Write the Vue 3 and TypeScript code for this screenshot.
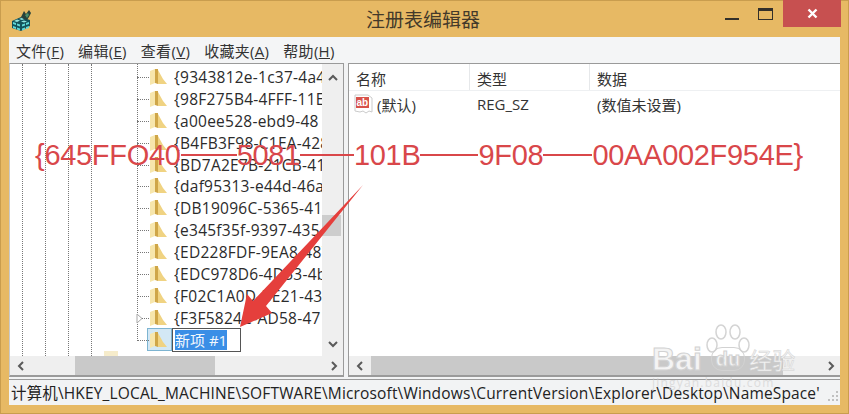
<script setup lang="ts">
const keys = [
  '{9343812e-1c37-4a4',
  '{98F275B4-4FFF-11E',
  '{a00ee528-ebd9-48',
  '{B4FB3F98-C1EA-428',
  '{BD7A2E7B-21CB-41',
  '{daf95313-e44d-46a',
  '{DB19096C-5365-41',
  '{e345f35f-9397-435',
  '{ED228FDF-9EA8-487',
  '{EDC978D6-4D53-4b',
  '{F02C1A0D-BE21-43',
  '{F3F5824C-AD58-47',
]
const guides = [12, 35, 58, 81]
const menus = [
  { label: '文件', key: 'F' },
  { label: '编辑', key: 'E' },
  { label: '查看', key: 'V' },
  { label: '收藏夹', key: 'A' },
  { label: '帮助', key: 'H' },
]
const parts = [
  { text: '{645FFO40', line: 56 },
  { text: '5081', line: 54 },
  { text: '101B', line: 58 },
  { text: '9F08', line: 49 },
  { text: '00AA002F954E}', line: 0 },
]
</script>

<template>
  <div class="window">
    <header class="titlebar">
      <svg class="app-icon" width="22" height="22" viewBox="0 0 22 22">
        <path d="M1 12l9-4 9 3v6l-9 5-9-3z" fill="#12525c" />
        <path d="M2 13l3 1v2l-3-1zM6 14.500l3 1v2l-3-1zM2 17l3 1v2l-3-1zM6 18.500l3 1v2l-3-1zM11 15.500l3-1v2l-3 1zM15 14l3-1v2l-3 1zM11 19.500l3-1v2l-3 1zM15 18l3-1v2l-3 1z" fill="#5fd8d8" />
        <path d="M3 12l3-1.500 3 1-3 1.500zM8 10l2.500-1 3 1-2.500 1zM10 12.500l3-1 3 1-3 1z" fill="#8fe6e0" />
        <path d="M10 8l3-6 2 3 3-4 2 3-2 4-2 3-3-1z" fill="#27423a" />
        <path d="M14 6l3-2 1 2-2 3z" fill="#4b8f6a" />
      </svg>
      <h1 class="title">注册表编辑器</h1>
      <div class="controls">
        <span class="min"></span>
        <span class="max"></span>
        <span class="close">
          <svg width="11" height="11" viewBox="0 0 11 11"><path d="M1.500 1.500l8 8M9.500 1.500l-8 8" stroke="#fff" stroke-width="2.400" /></svg>
        </span>
      </div>
    </header>

    <nav class="menubar">
      <span v-for="m in menus" :key="m.key" class="menu">{{ m.label }}(<u>{{ m.key }}</u>)</span>
    </nav>

    <main class="panes">
      <section class="pane tree">
        <div class="tree-body">
          <i v-for="x in guides" :key="x" class="guide" :style="{ left: x + 'px' }"></i>
          <i class="guide trunk"></i>
          <i class="peek"></i>
          <div class="rows">
            <div v-for="(k, i) in keys" :key="k" class="row">
              <svg v-if="i === 11" class="twisty" width="7" height="11" viewBox="0 0 7 11"><path d="M1 1l5 4.500-5 4.500z" fill="#fff" stroke="#a6a6a6" /></svg>
              <i class="stub"></i>
              <svg class="folder" width="18" height="18" viewBox="0 0 18 18">
                <path d="M5 1h3v15l-3-1z" fill="#cfa648" />
                <path d="M8 2l5 9 4 5H8z" fill="#f0d382" />
                <path d="M0 3l5-2v14l-5 2z" fill="#f7e6ac" />
              </svg>
              <span class="key">{{ k }}</span>
            </div>
            <div class="row">
              <i class="stub"></i>
              <span class="folder-sel">
                <svg width="18" height="18" viewBox="0 0 18 18">
                  <path d="M5 1h3v15l-3-1z" fill="#cfa648" />
                  <path d="M8 2l5 9 4 5H8z" fill="#f0d382" />
                  <path d="M0 3l5-2v14l-5 2z" fill="#f7e6ac" />
                </svg>
              </span>
              <span class="edit"><span class="edit-text">新项 #1</span></span>
            </div>
          </div>
          <div class="vbar">
            <svg width="12" height="8" viewBox="0 0 12 8"><path d="M2 6l4-4 4 4" fill="none" stroke="#5a5a5a" stroke-width="2" /></svg>
            <span class="vthumb"></span>
            <svg width="12" height="8" viewBox="0 0 12 8"><path d="M2 2l4 4 4-4" fill="none" stroke="#5a5a5a" stroke-width="2" /></svg>
          </div>
        </div>
        <div class="hbar">
          <svg width="8" height="12" viewBox="0 0 8 12"><path d="M6 2L2 6l4 4" fill="none" stroke="#5a5a5a" stroke-width="2" /></svg>
          <span class="hthumb left-thumb"></span>
          <svg width="8" height="12" viewBox="0 0 8 12"><path d="M2 2l4 4-4 4" fill="none" stroke="#5a5a5a" stroke-width="2" /></svg>
        </div>
      </section>

      <section class="pane list">
        <div class="list-head">
          <span class="col c-name">名称</span>
          <span class="col c-type">类型</span>
          <span class="col c-data">数据</span>
        </div>
        <div class="list-row">
          <span class="c-name value-name">
            <svg width="19" height="20" viewBox="0 0 19 20">
              <path d="M1 1h13l4 3v14l-3-1-3 2-3-2-3 1-5-1z" fill="#fff" stroke="#cbcbcb" />
              <rect x="2" y="3" width="13" height="11" fill="#d8524a" />
              <text x="2.500" y="12" font-size="10" font-weight="700" fill="#fff" font-family="Liberation Sans, sans-serif">ab</text>
            </svg>
            (默认)
          </span>
          <span class="c-type value-cell">REG_SZ</span>
          <span class="c-data value-cell">(数值未设置)</span>
        </div>
        <div class="list-fill"></div>
        <div class="hbar">
          <svg width="8" height="12" viewBox="0 0 8 12"><path d="M6 2L2 6l4 4" fill="none" stroke="#5a5a5a" stroke-width="2" /></svg>
          <span class="hthumb right-thumb"></span>
          <svg width="8" height="12" viewBox="0 0 8 12"><path d="M2 2l4 4-4 4" fill="none" stroke="#5a5a5a" stroke-width="2" /></svg>
        </div>
      </section>
    </main>

    <footer class="statusbar">
      <span class="path">计算机\HKEY_LOCAL_MACHINE\SOFTWARE\Microsoft\Windows\CurrentVersion\Explorer\Desktop\NameSpace'</span>
      <svg class="grip" width="12" height="12" viewBox="0 0 12 12"><path d="M9 1h2v2H9zM5 5h2v2H5zM9 5h2v2H9zM1 9h2v2H1zM5 9h2v2H5zM9 9h2v2H9z" fill="#c0c0c0" /></svg>
    </footer>

    <div class="note">
      <template v-for="p in parts" :key="p.text">
        <span>{{ p.text }}</span>
        <i v-if="p.line" class="note-line" :style="{ width: p.line + 'px' }"></i>
      </template>
    </div>

    <svg class="arrow" width="140" height="150" viewBox="0 0 140 150">
      <path d="M133 2L36 123l6 7-32 14 7-33 6 7L133 2z" fill="#e53f3c" />
    </svg>

    <div class="watermark">
      <svg class="paw" width="48" height="34" viewBox="0 0 48 34">
        <g fill="none" stroke="#d4d4d4" stroke-width="1.500">
          <ellipse cx="8" cy="21" rx="5" ry="7" />
          <ellipse cx="17" cy="8" rx="5" ry="7" />
          <ellipse cx="31" cy="8" rx="5" ry="7" />
          <ellipse cx="40" cy="21" rx="5" ry="7" />
        </g>
      </svg>
      <div class="wm-main">
        <span>Bai</span>
        <span class="wm-du">du</span>
        <span class="wm-cn">经验</span>
      </div>
      <div class="wm-url">jingyan.baidu.com</div>
    </div>
  </div>
</template>

<style scoped>
.window {
  position: relative;
  box-sizing: border-box;
  width: 849px;
  height: 414px;
  display: flex;
  flex-direction: column;
  padding: 0 9px 9px;
  overflow: hidden;
  background: #e7b964;
  box-shadow: inset 0 0 0 1px #c99d4e;
  color: #1a1a1a;
  font-family: "Open Sans", "Noto Sans CJK SC", sans-serif;
}

.titlebar {
  position: relative;
  display: flex;
  align-items: center;
  justify-content: center;
  height: 37px;
  flex: none;
}

.app-icon {
  position: absolute;
  left: 2px;
  top: 9px;
}

.title {
  margin: 0 3px 0 0;
  font-size: 19px;
  font-weight: 400;
  line-height: 37px;
  color: #43392a;
  font-family: "Noto Sans CJK SC", sans-serif;
}

.controls {
  position: absolute;
  right: -1px;
  top: 0;
  display: flex;
  align-items: flex-start;
}

.min {
  width: 14px;
  height: 2px;
  margin-top: 18px;
  background: #33302a;
}

.max {
  box-sizing: border-box;
  width: 15px;
  height: 12px;
  margin: 8px 0 0 19px;
  border: 1px solid #33302a;
  border-top-width: 3px;
}

.close {
  display: flex;
  align-items: center;
  justify-content: center;
  width: 58px;
  height: 27px;
  margin-left: 10px;
  background: #c75050;
}

.menubar {
  display: flex;
  align-items: center;
  gap: 14px;
  flex: none;
  height: 26px;
  padding-left: 7px;
  font-size: 15px;
  letter-spacing: 0.3px;
  color: #333;
  background: #f4f5f6;
}

.panes {
  display: flex;
  gap: 4px;
  flex: 1;
  min-height: 0;
  padding-bottom: 2px;
  background: #f2f3f4;
}

.pane {
  display: flex;
  flex-direction: column;
  box-sizing: border-box;
  min-width: 0;
  border: 1px solid #9a9a9a;
  border-bottom-width: 2px;
  background: #fff;
}

.tree {
  width: 335px;
  border-left-color: #c9c9c9;
}

.list {
  flex: 1;
  border-right: 0;
}

.tree-body {
  position: relative;
  flex: 1;
  min-height: 0;
  display: flex;
  overflow: hidden;
}

.guide {
  position: absolute;
  top: 0;
  bottom: 0;
  border-left: 1px dotted #777;
}

.trunk {
  left: 127px;
  bottom: 15px;
}

.peek {
  position: absolute;
  left: 94px;
  bottom: 0;
  width: 14px;
  height: 5px;
  background: #f6eccb;
}

.rows {
  position: relative;
  flex: 1;
  min-width: 0;
  padding-top: 2px;
}

.row {
  position: relative;
  display: flex;
  align-items: center;
  height: 21.9px;
  padding-left: 140px;
}

.stub {
  position: absolute;
  left: 127px;
  top: 11px;
  width: 12px;
  border-top: 1px dotted #777;
}

.twisty {
  position: absolute;
  left: 126px;
  top: 6px;
  z-index: 1;
}

.folder {
  flex: none;
}

.key {
  margin-left: 6px;
  overflow: hidden;
  white-space: nowrap;
  font-size: 15.5px;
  letter-spacing: 0.25px;
  width: 148px;
  color: #2b2b2b;
}

.folder-sel {
  display: flex;
  align-items: center;
  box-sizing: border-box;
  height: 23px;
  width: 25px;
  margin-left: -3px;
  padding-left: 2px;
  background: #d3e8f5;
  border: 1px solid #7db4d1;
}

.edit {
  box-sizing: border-box;
  display: flex;
  align-items: center;
  width: 69px;
  height: 24px;
  padding-left: 2px;
  background: #fff;
  border: 1px solid #555;
}

.edit-text {
  font-size: 15px;
  line-height: 20px;
  color: #f3f8fd;
  background: #3a8ee6;
}

.vbar {
  flex: none;
  display: flex;
  flex-direction: column;
  align-items: center;
  justify-content: space-between;
  position: relative;
  width: 21px;
  padding: 10px 0 8px;
  background: #efefef;
}

.vthumb {
  position: absolute;
  top: 151px;
  left: 0;
  width: 19px;
  height: 21px;
  background: #cdcdcd;
}

.hbar {
  position: relative;
  flex: none;
  display: flex;
  align-items: center;
  justify-content: space-between;
  height: 19px;
  padding: 0 5px 0 7px;
  background: #efefef;
}

.hthumb {
  position: absolute;
  top: 0;
  bottom: 0;
  background: #c9c9c9;
}

.left-thumb {
  left: 65px;
  width: 140px;
}

.right-thumb {
  left: 22px;
  width: 412px;
}

.list-head {
  display: flex;
  flex: none;
  box-sizing: border-box;
  height: 27px;
  align-items: center;
  font-size: 15px;
  color: #333;
  border-bottom: 1px solid #eef0f2;
}

.col {
  box-sizing: border-box;
  display: flex;
  align-items: center;
  height: 100%;
  padding: 3px 0 0 7px;
  border-right: 1px solid #e6e8ea;
}

.c-name {
  width: 121px;
  flex: none;
}

.c-type {
  width: 120px;
  flex: none;
}

.c-data {
  flex: 1;
  border-right: 0;
}

.list-row {
  display: flex;
  flex: none;
  height: 26px;
  align-items: center;
  font-size: 15px;
  color: #333;
}

.value-name {
  display: flex;
  align-items: center;
  padding-left: 5px;
  box-sizing: border-box;
  gap: 4px;
}

.value-cell {
  box-sizing: border-box;
  padding-left: 7px;
}

.list-fill {
  flex: 1;
}

.statusbar {
  display: flex;
  align-items: center;
  justify-content: space-between;
  flex: none;
  height: 25px;
  padding-left: 2px;
  font-size: 15.5px;
  white-space: nowrap;
  color: #222;
  background: #f2f3f4;
  border-top: 1px solid #9a9a9a;
}

.path {
  letter-spacing: 0.15px;
}

.grip {
  margin: 6px 1px 0 0;
}

.note {
  position: absolute;
  left: 35px;
  top: 135px;
  display: flex;
  align-items: center;
  font-size: 29px;
  letter-spacing: -0.3px;
  line-height: 40px;
  color: #d9474a;
  font-family: "Liberation Sans", sans-serif;
  white-space: nowrap;
}

.note-line {
  height: 2px;
  background: #d9474a;
}

.arrow {
  position: absolute;
  left: 230px;
  top: 183px;
}

.watermark {
  position: absolute;
  left: 652px;
  top: 324px;
  width: 150px;
  color: #f4f4f4;
}

.paw {
  display: block;
  margin: 0 0 -12px 52px;
}

.wm-main {
  display: flex;
  align-items: center;
  height: 26px;
  font-size: 32px;
  font-weight: 700;
  font-family: "Liberation Sans", sans-serif;
  -webkit-text-stroke: 1px #d2d2d2;
}

.wm-du {
  margin-left: 9px;
  padding: 0 4px;
  font-size: 20px;
  line-height: 22px;
  border: 1.5px solid #d2d2d2;
  border-radius: 11px;
}

.wm-cn {
  margin-left: 4px;
  font-size: 23px;
  font-weight: 400;
  font-family: "Noto Sans CJK SC", sans-serif;
  -webkit-text-stroke: 0.5px #d2d2d2;
}

.wm-url {
  margin-top: 4px;
  font-size: 12px;
  letter-spacing: 1.2px;
  line-height: 14px;
  color: #dcdcdc;
}
</style>

<style>
html,
body {
  margin: 0;
  overflow: hidden;
}
</style>
